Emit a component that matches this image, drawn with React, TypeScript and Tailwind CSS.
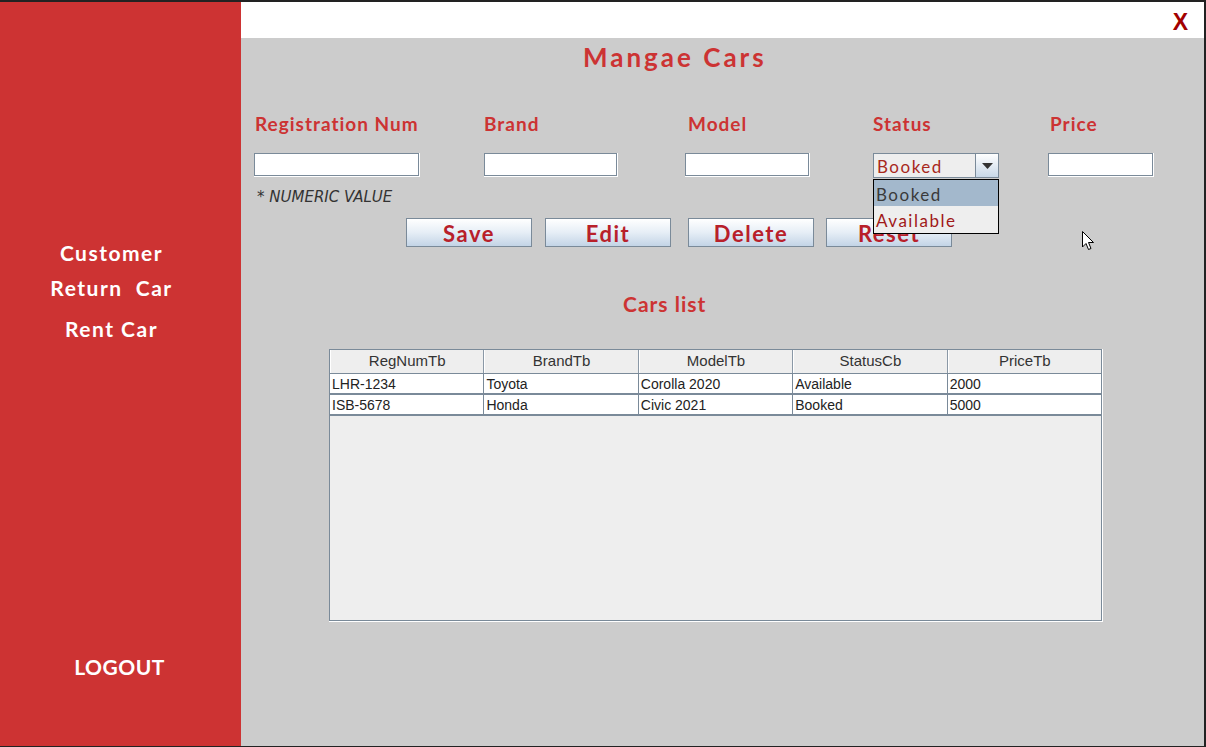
import { useState } from 'react';

const HEAD = "font-['Lato','Open_Sans',sans-serif]";

const FIELDS = [
  { label: 'Registration Num', w: 'w-[230px]', input: 'w-[166px]', lab: 'ml-px' },
  { label: 'Brand', w: 'w-[201px]', input: 'w-[134px]', lab: '' },
  { label: 'Model', w: 'w-[188px]', input: 'w-[125px]', lab: 'ml-[3px]' },
];

const ROWS = [
  ['LHR-1234', 'Toyota', 'Corolla 2020', 'Available', '2000'],
  ['ISB-5678', 'Honda', 'Civic 2021', 'Booked', '5000'],
];

const COLS = ['RegNumTb', 'BrandTb', 'ModelTb', 'StatusCb', 'PriceTb'];

function TextBox({ className }: { className: string }) {
  return (
    <div className={`h-[24px] border-r border-b border-white ${className}`}>
      <div className="h-full w-full border border-[#7a8a99] bg-white" />
    </div>
  );
}

function Btn({ text }: { text: string }) {
  return (
    <button className="h-[29px] w-[126px] overflow-hidden border border-[#7a8a99] bg-gradient-to-b from-white via-[#e6eef6] to-[#c3d4e6] text-[22px] font-bold leading-[30px] tracking-[1.5px] text-[#b8202a]">
      {text}
    </button>
  );
}

export default function App() {
  const [status] = useState('Booked');

  return (
    <div className={`flex h-[747px] w-[1206px] border-t-2 border-r-2 border-b border-[#222] ${HEAD}`}>
      <aside className="flex w-[241px] shrink-0 flex-col bg-[#cd3333] text-[21px] font-bold tracking-[1.5px] text-white">
        <div className="mt-[238px] flex flex-col items-center gap-[9px] pr-[18px]">
          <span className="leading-[26px]">Customer</span>
          <span className="whitespace-pre leading-[26px]">Return  Car</span>
          <span className="mt-[6px] leading-[26px]">Rent Car</span>
        </div>
        <div className="mt-auto mb-[66px] pr-[2px] text-center leading-[26px] tracking-[0.5px]">LOGOUT</div>
      </aside>

      <main className="flex flex-1 flex-col">
        <div className="flex h-[36px] items-center justify-end bg-white pr-[16px] pt-[4px]">
          <span className="font-['Liberation_Sans',sans-serif] text-[23px] font-bold text-[#a30000]">X</span>
        </div>

        <div className="relative flex flex-1 flex-col bg-[#cccccc]">
          <h1 className="ml-[342px] mt-[2px] text-[26px] font-bold leading-[34px] tracking-[3px] text-[#cc3333]">Mangae Cars</h1>

          <div className="ml-[13px] mt-[38px] flex">
            {FIELDS.map((f) => (
              <div key={f.label} className={`flex flex-col ${f.w}`}>
                <span className={`text-[19px] font-bold leading-[24px] tracking-[1px] text-[#cc3333] ${f.lab}`}>{f.label}</span>
                <TextBox className={`mt-[17px] ${f.input}`} />
              </div>
            ))}

            <div className="relative flex w-[175px] flex-col">
              <span className="text-[19px] font-bold leading-[24px] tracking-[1px] text-[#cc3333]">Status</span>
              <div className="mt-[17px] flex h-[25px] w-[126px] border border-[#7a8a99]">
                <div className="flex flex-1 items-center bg-[#eeeeee] pl-[3px] pt-[2px] text-[17px] leading-none tracking-[1.5px] text-[#a8281c]">
                  {status}
                </div>
                <div className="flex w-[23px] items-center justify-center border-l border-[#7a8a99] bg-gradient-to-b from-white to-[#c8d8e8]">
                  <svg width="11" height="6" viewBox="0 0 11 6">
                    <path d="M0 0 L11 0 L5.5 6 Z" fill="#333" />
                  </svg>
                </div>
              </div>
              <div className="absolute top-[67px] left-0 z-10 w-[126px] border border-black bg-[#eeeeee] text-[17px] tracking-[1.5px]">
                <div className="flex h-[26px] items-center bg-[#a3b8cc] pl-[2px] pt-[4px] text-[#3a3a3a]">Booked</div>
                <div className="flex h-[27px] items-center pl-[2px] pt-[3px] text-[#a01818]">Available</div>
              </div>
            </div>

            <div className="flex flex-col">
              <span className="ml-[2px] text-[19px] font-bold leading-[24px] tracking-[1px] text-[#cc3333]">Price</span>
              <TextBox className="mt-[17px] w-[106px]" />
            </div>
          </div>

          <span className="ml-[16px] mt-[10px] font-['DejaVu_Sans',sans-serif] text-[15px] italic leading-[18px] text-[#333]">
            * NUMERIC VALUE
          </span>

          <div className="ml-[165px] mt-[12px] flex gap-[13px]">
            <Btn text="Save" />
            <Btn text="Edit" />
            <div className="ml-[4px] flex gap-[12px]">
              <Btn text="Delete" />
              <Btn text="Reset" />
            </div>
          </div>

          <h2 className="ml-[382px] mt-[43px] text-[21px] font-bold leading-[28px] tracking-[1px] text-[#cc3333]">Cars list</h2>

          <div className="ml-[88px] mt-[31px] w-[774px] border-r border-b border-white">
            <div className="flex h-[272px] flex-col border border-[#7a8a99] bg-[#eeeeee] font-['Liberation_Sans',sans-serif] text-[14px] text-[#333]">
              <div className="flex h-[24px] border-b border-[#7a8a99] text-[15px]">
                {COLS.map((c, i) => (
                  <div
                    key={c}
                    className={`flex flex-1 items-center justify-center border-l border-white bg-[#eeeeee] ${i < 4 ? 'border-r border-r-[#8a98a6]' : ''}`}
                  >
                    {c}
                  </div>
                ))}
              </div>
              {ROWS.map((r) => (
                <div key={r[0]} className="flex h-[21px] border-b-2 border-[#7a8a99] bg-white text-[#222]">
                  {r.map((v, i) => (
                    <div
                      key={i}
                      className={`flex flex-1 items-center pl-[2px] leading-none ${i < 4 ? 'border-r border-[#7a8a99]' : ''}`}
                    >
                      {v}
                    </div>
                  ))}
                </div>
              ))}
            </div>
          </div>

          <svg className="absolute left-[841px] top-[193px]" width="13" height="20" viewBox="0 0 13 20">
            <path d="M0.5 0.5 L0.5 16 L4 12.5 L6.5 18.5 L9 17.5 L6.5 11.5 L11.5 11.5 Z" fill="white" stroke="black" strokeWidth="1" />
          </svg>
        </div>
      </main>
    </div>
  );
}
